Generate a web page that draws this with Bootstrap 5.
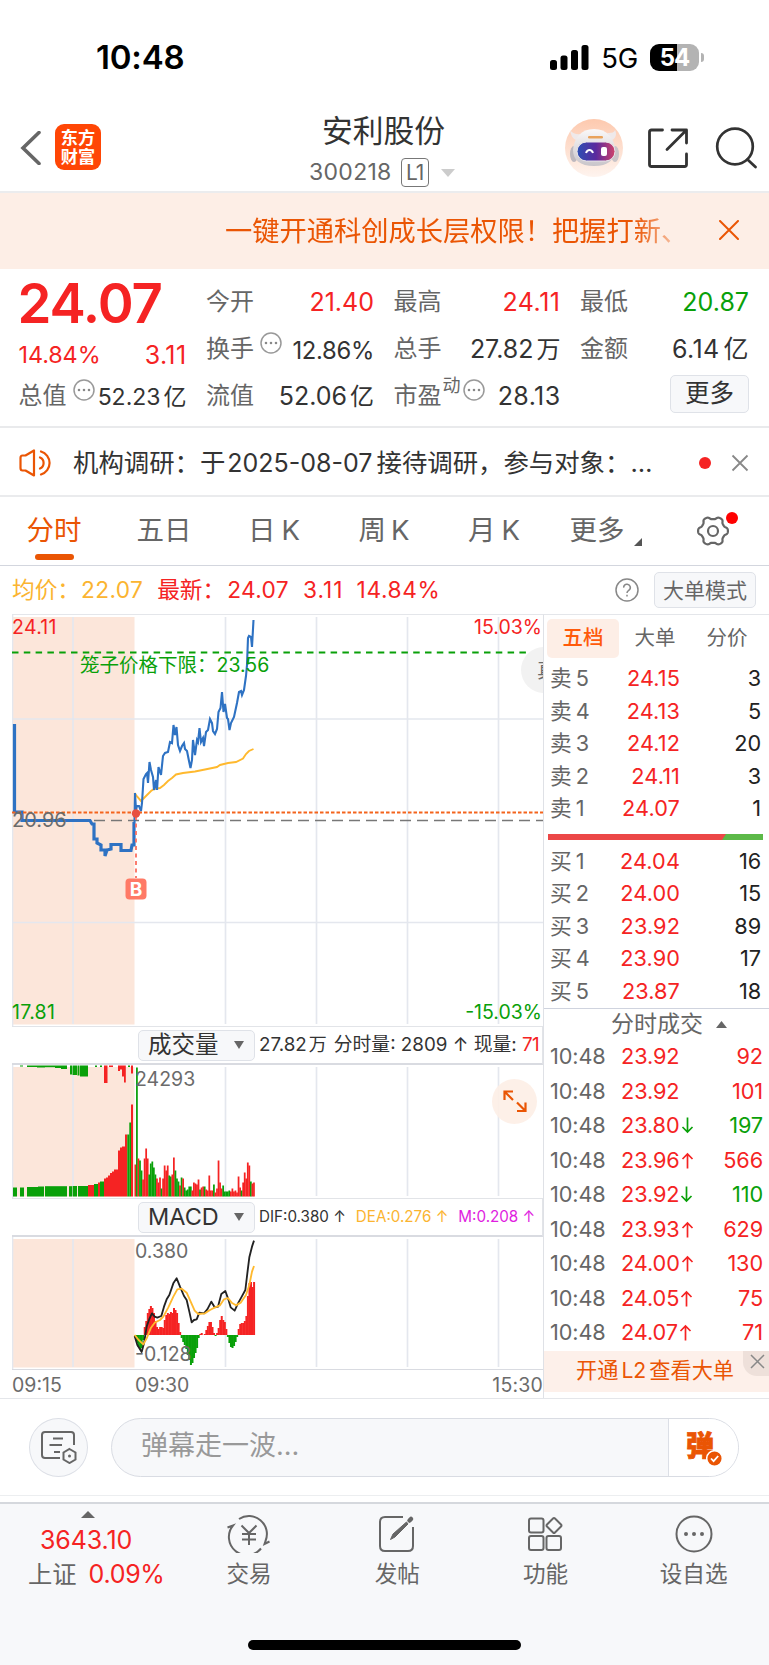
<!DOCTYPE html>
<html lang="zh-CN">
<head>
<meta charset="utf-8">
<meta name="viewport" content="width=device-width, initial-scale=1">
<title>安利股份 300218</title>
<link href="https://cdn.jsdelivr.net/npm/bootstrap@5.3.0/dist/css/bootstrap.min.css" rel="stylesheet">
<style>
:root{--up:#f52323;--down:#09a009;--brand:#ea5504;--ink:#333;--sub:#666;--rule:#e4e6ea;--panel:#f7f8fa}
body{font-family:Inter,"Noto Sans CJK SC",sans-serif;color:var(--ink);background:#fff;width:769px;height:1665px;overflow:hidden;line-height:1;font-weight:400;-webkit-font-smoothing:antialiased}
svg{display:block;flex:none}
.up{color:var(--up)}.down{color:var(--down)}.sub{color:var(--sub)}.brand{color:var(--brand)}
.statusbar{height:112px;padding:3px 65px 0 96px}
.clock{font-size:33px;font-weight:600;letter-spacing:-.2px;color:#000}
.battery{width:49px;height:27px;border-radius:9px;background:linear-gradient(90deg,#000 27px,#b3b3b3 27px);color:#fff;font-size:24px;font-weight:700;letter-spacing:-1px}
.nub{width:3px;height:9px;border-radius:0 4px 4px 0;background:#b3b3b3;margin-left:2px}
.topbar{height:81px;border-bottom:2px solid #ebecee;display:grid;grid-template-columns:270px 1fr 270px}
.applogo{width:46px;height:46px;border-radius:9px;background:#ff4605;color:#fff;font-size:17.2px;font-weight:700;line-height:19px;text-align:center;padding-top:4px}
.stockname{font-size:30.8px;line-height:36px;color:#333;margin:1px 2px 0 0}
.lv{border:1px solid #777;border-radius:4px;width:28px;height:29px;font-size:21px;letter-spacing:-1px}
.promo{height:76px;background:#fdeee6;font-size:27.25px;padding:0 29px 0 225px}
.promo .msg{-webkit-mask-image:linear-gradient(90deg,#000 410px,transparent 466px);width:470px;white-space:nowrap;overflow:hidden;line-height:40px;padding-top:2px}
.quote{height:159px;border-bottom:2px solid #e9eaec;display:grid;grid-template-columns:168px 168px 167px 169px;column-gap:19.5px;grid-template-rows:47px 47px 47px;padding:9.5px 19px 0 18.5px;font-size:25px}
.quote>div{display:flex;justify-content:space-between;align-items:center;white-space:nowrap}
.quote .sub{font-size:24px}
.quote b{font-size:54.5px;font-weight:600;letter-spacing:-1.1px;margin:3px 0 0 -1px}
.greybtn{background:var(--panel);border:1px solid #dfe2e8;border-radius:5px;display:flex;align-items:center;justify-content:center}
.newsbar{height:69px;border-bottom:2px solid #eaebed;padding:3px 20px 0 19px;font-size:25.4px}
.tabs{height:69px;border-bottom:1px solid #d3d6de;font-size:27.5px;color:var(--sub)}
.tabs>div{width:110px;height:68px;display:flex;align-items:center;justify-content:center;position:relative;left:-1px}
.tabs .on{color:var(--brand)}
.tabs .on::after{content:"";position:absolute;left:36px;top:57px;width:39px;height:6px;border-radius:3px;background:var(--brand)}
.inforow{height:48px;padding:0 13px 0 12px;font-size:22.7px}
.inforow .n{letter-spacing:.35px}
.board{height:785px;border-bottom:1px solid #e4e6ea}
.charts{width:531px;margin-left:12px;border-top:1px solid var(--rule)}
.charts text{font-size:19.5px;fill:#6b6b6b}
.indbar{border:1px solid #e2e4e8;border-left:0;border-bottom:2px solid #d9dbe1;font-size:18.8px;padding-left:126px;width:531px}
.indbar .greybtn{width:117px;height:31px;font-size:23.5px;justify-content:space-between;padding:0 10px 0 9px;flex:none;color:#333}
.axis{font-size:19.5px;color:#6b6b6b;height:29px;padding-top:3px}
.side{width:226px;border-left:1px solid #dfe1e6;border-top:1px solid var(--rule)}
.subtabs{height:48px;font-size:20.5px;padding:4px 0 0 3px;color:var(--sub)}
.subtabs>div{height:39px;width:72px;display:flex;align-items:center;justify-content:center;border-radius:5px}
.subtabs .on{background:#fdeee6;color:#ff5a0a;font-weight:500}
.lvrow,.tick{display:grid;align-items:center;font-size:21.7px;white-space:nowrap}
.lvrow{height:32.5px;grid-template-columns:60px 70px 1fr;padding:0 8px 0 6px}
.lvrow>:nth-child(2){text-align:right;letter-spacing:.1px}
.lvrow>:nth-child(3){text-align:right;color:#222;letter-spacing:-.1px}
.tick{height:34.5px;grid-template-columns:71px 1fr auto;padding:0 6px 0 6px;letter-spacing:-.1px}
.tick svg{display:inline-block;vertical-align:-1px}
.l2{height:41px;background:#fdf0ea;color:var(--brand);font-size:21.2px;position:relative;padding-left:32px}
.l2 i{position:absolute;right:0;top:0;width:26px;height:25px;background:#eee0da;border-radius:0 0 0 14px}
.danmu{height:97px;border-bottom:1px solid #eceef0;padding:0 30px 0 29px}
.rnd{width:59px;height:59px;border-radius:50%;border:1px solid #dcdfe6;background:var(--panel)}
.pill{width:629px;height:59px;border-radius:30px;border:1px solid #d9dce3;background:var(--panel);overflow:hidden;margin-left:23px;font-size:27px;color:#999}
.send{width:70px;background:#fff;border-left:1px solid #dcdfe6;position:relative}
.botnav{margin-top:6px;height:163px;background:var(--panel);border-top:2px solid #d5d8dd;font-size:23px;color:var(--sub);position:relative}
.botnav .cell{width:148.2px;display:flex;flex-direction:column;align-items:center;padding-top:11px}
.botnav .cell span{line-height:30px;margin-top:6px;font-size:22.6px}
.idx{width:175px;position:relative}
.homebar{position:absolute;left:248px;top:136px;width:273px;height:10px;border-radius:5px;background:#000}
</style>
</head>
<body>
<div class="statusbar d-flex align-items-center justify-content-between">
  <span class="clock">10:48</span>
  <div class="d-flex align-items-center">
    <svg width="39" height="25" viewBox="0 0 39 25"><rect x="0" y="15" width="7" height="10" rx="2.5"/><rect x="10.5" y="10.5" width="7" height="14.5" rx="2.5"/><rect x="21" y="5" width="7" height="20" rx="2.5"/><rect x="31.5" y="0" width="7" height="25" rx="2.5"/></svg>
    <span class="text-black" style="font-size:27.5px;margin:3px 12px 0 12px;letter-spacing:-.2px">5G</span>
    <div class="battery d-flex align-items-center justify-content-center">54</div><div class="nub"></div>
  </div>
</div>

<header class="topbar">
  <div class="d-flex align-items-center pb-2" style="padding-left:20px">
    <svg width="22" height="34" viewBox="0 0 22 34" fill="none" stroke="#666" stroke-width="3.6"><path d="M19 1.5 3 17 19 32.5" stroke-linecap="round"/></svg>
    <div class="applogo" style="margin:-1px 0 0 13px">东方<br>财富</div>
  </div>
  <div class="text-center">
    <div class="stockname">安利股份</div>
    <div class="d-flex align-items-center sub" style="margin:9px 0 0 39px;font-size:23px;letter-spacing:.3px">300218
      <span class="lv d-flex align-items-center justify-content-center" style="margin:0 12px 0 9px">L1</span>
      <svg width="14" height="8" viewBox="0 0 14 8"><path d="M0 0h14L7 8z" fill="#ccc"/></svg>
    </div>
  </div>
  <div class="d-flex align-items-center" style="padding:0 0 7px 66px">
    <svg width="58" height="58" viewBox="0 0 58 58">
      <defs><linearGradient id="halo" x2="0" y2="1"><stop stop-color="#fdc9ae"/><stop offset="1" stop-color="#fef4ef"/></linearGradient>
      <linearGradient id="visor"><stop stop-color="#2b4fb4"/><stop offset=".5" stop-color="#5b2a9e"/><stop offset="1" stop-color="#d0426a"/></linearGradient>
      <linearGradient id="shell" x2="0" y2="1"><stop stop-color="#faf8f8"/><stop offset="1" stop-color="#c9c5ca"/></linearGradient></defs>
      <circle cx="29" cy="29" r="29" fill="url(#halo)"/>
      <path d="M5 11c1 5 2 8 6 10l6-6c-5 1-9 0-12-4zM50 11c-1 3-4 3-8 3l5 7c4-2 5-6 3-10z" fill="#efe9ea"/>
      <ellipse cx="9" cy="35" rx="4" ry="8" fill="#bdb8be"/><ellipse cx="50" cy="35" rx="4" ry="8" fill="#c9c4c8"/>
      <path d="M29 10c13 0 20 9 21 20 0 11-7 17-21 17S8 41 8 31c1-12 8-21 21-21z" fill="url(#shell)"/>
      <rect x="12" y="23" width="38" height="19" rx="9.500" fill="url(#visor)" stroke="#e9e4ea"/>
      <rect x="23" y="17" width="15" height="2.6" rx="1.300" fill="#e9a35c"/>
      <path d="M21 34c1.500-4 5.500-4 7 0" fill="none" stroke="#fff" stroke-width="2"/><rect x="36" y="28" width="6" height="9" rx="2" fill="#fff"/>
    </svg>
    <svg style="margin-left:25px" width="40" height="40" viewBox="0 0 40 40" fill="none" stroke="#333" stroke-width="2.8" stroke-linecap="round" stroke-linejoin="round"><path d="M14.5 2H3.5Q1.5 2 1.5 4V36.500Q1.5 38.500 3.5 38.500H36.500Q38.500 38.500 38.500 36.500V26M24 2H38.500V15M38 2.500 19 21.500"/></svg>
    <svg style="margin-left:27px" width="42" height="42" viewBox="0 0 42 42" fill="none" stroke="#333" stroke-width="2.7" stroke-linecap="round"><circle cx="20" cy="19.500" r="17.8"/><path d="m32.500 32.500 8 7.500"/></svg>
  </div>
</header>

<div class="promo brand d-flex align-items-center justify-content-between">
  <div class="msg">一键开通科创成长层权限！把握打新、</div>
  <svg style="margin:0 1px 2px 0" width="20" height="20" viewBox="0 0 20 20" stroke="#ea5504" stroke-width="2" stroke-linecap="round"><path d="M1 1 19 19M19 1 1 19"/></svg>
</div>

<section class="quote">
  <div class="up"><b>24.07</b></div>
  <div><span class="sub">今开</span><span class="up">21.40</span></div>
  <div><span class="sub">最高</span><span class="up" style="letter-spacing:.5px">24.11</span></div>
  <div><span class="sub">最低</span><span class="down">20.87</span></div>
  <div class="up" style="padding-top:12px;font-size:23.4px"><span style="letter-spacing:-.1px">14.84%</span><span style="font-size:25px;letter-spacing:.4px">3.11</span></div>
  <div><span class="sub d-flex">换手<svg style="margin:-5px 0 0 6px" width="22" height="22" viewBox="0 0 22 22"><circle cx="11" cy="11" r="10" fill="none" stroke="#999" stroke-width="1.5"/><path d="M6 11h0M11 11h0M16 11h0" stroke="#888" stroke-width="2.6" stroke-linecap="round"/></svg></span><span style="font-size:23.8px;letter-spacing:-.3px;padding-top:3px">12.86%</span></div>
  <div><span class="sub">总手</span><span>27.82<span style="margin-left:3px;font-size:24px">万</span></span></div>
  <div><span class="sub">金额</span><span style="letter-spacing:.4px">6.14<span style="margin-left:4px">亿</span></span></div>
  <div><span class="sub d-flex">总值<svg style="margin:-5px 0 0 6px" width="22" height="22" viewBox="0 0 22 22"><circle cx="11" cy="11" r="10" fill="none" stroke="#999" stroke-width="1.5"/><path d="M6 11h0M11 11h0M16 11h0" stroke="#888" stroke-width="2.6" stroke-linecap="round"/></svg></span><span style="font-size:23px;padding-top:2px">52.23<span style="margin-left:3px">亿</span></span></div>
  <div><span class="sub">流值</span><span>52.06<span style="margin-left:3px;font-size:24px">亿</span></span></div>
  <div><span class="sub d-flex">市盈<span style="font-size:18px;margin:-7px 0 0 1px">动</span><svg style="margin:-5px 0 0 2px" width="22" height="22" viewBox="0 0 22 22"><circle cx="11" cy="11" r="10" fill="none" stroke="#999" stroke-width="1.5"/><path d="M6 11h0M11 11h0M16 11h0" stroke="#888" stroke-width="2.6" stroke-linecap="round"/></svg></span><span style="letter-spacing:.4px">28.13</span></div>
  <div class="justify-content-end"><span class="greybtn" style="width:79px;height:38px;margin-top:-5px;font-size:24.5px">更多</span></div>
</section>

<div class="newsbar d-flex align-items-center">
  <svg width="34" height="28" viewBox="0 0 34 28" fill="none" stroke="#ea5504" stroke-width="2.2" stroke-linejoin="round" stroke-linecap="round"><path d="M15 1.5V26.500L6.500 21.500H3.500Q1.500 21.500 1.500 19V9Q1.500 6.500 3.500 6.500H6.500zM21 8.500a6 6 0 0 1 0 11M22 2.500a12 12 0 0 1 0 23"/></svg>
  <span class="text-nowrap" style="margin:-1px 0 0 20px">机构调研：于<span style="margin:0 4px 0 2px;font-size:25px">2025-08-07</span>接待调研，参与对象：…</span>
  <svg class="ms-auto" width="12" height="12"><circle cx="6" cy="6" r="6" fill="#f52323"/></svg>
  <svg style="margin-left:20px" width="18" height="18" viewBox="0 0 18 18" stroke="#888" stroke-width="1.8"><path d="M1.500 1.500 16.500 16.500M16.500 1.500 1.500 16.500"/></svg>
</div>

<nav class="tabs d-flex">
  <div class="on">分时</div><div>五日</div><div>日<span style="margin-left:6px">K</span></div><div>周<span style="margin-left:5px">K</span></div><div>月<span style="margin-left:6px">K</span></div>
  <div style="padding-left:3px">更多<svg style="margin:22px 0 0 9px" width="8" height="8"><path d="M8 0V8H0z" fill="#555"/></svg></div>
  <div style="width:107px"><svg width="34" height="32" viewBox="-17 -16 34 32" fill="none" stroke="#666" stroke-width="2.2"><path id="gear"/><circle r="5"/></svg>
  <svg class="position-absolute" style="left:67px;top:15px" width="12" height="12"><circle cx="6" cy="6" r="6" fill="red"/></svg></div>
</nav>

<div class="inforow d-flex align-items-center">
  <span style="color:#fbb430">均价：<span class="n" style="margin-left:1px">22.07</span></span>
  <span class="up" style="margin-left:14px">最新：<span class="n" style="margin-left:2px">24.07</span></span>
  <span class="up n" style="margin-left:14px;letter-spacing:1px">3.11</span><span class="up n" style="margin-left:13px;letter-spacing:.6px">14.84%</span>
  <svg class="ms-auto" width="24" height="24" viewBox="0 0 24 24" fill="none" stroke="#888" stroke-width="1.5"><circle cx="12" cy="12" r="11"/><path d="M8.700 9.600a3.300 3.300 0 1 1 5 2.700q-1.700 1-1.700 2.700M12 16.800v1.700"/></svg>
  <span class="greybtn sub" style="width:102px;height:36px;margin-left:15px;font-size:21px">大单模式</span>
</div>

<div class="board d-flex">
  <div class="charts">
    <svg width="531" height="411" viewBox="12 615 531 411" fill="none">
      <path d="M12.500 617H134.500V1024.500H12.500z" fill="#fce6da"/>
      <path d="M73 617V1024M225.500 617V1024M316.500 617V1024M407.500 617V1024M498.500 617V1024M12 719H544M12 922.500H544M12.500 615V1027" stroke="#e4e7ee" stroke-width="1.700"/>
      <path d="M12 652.500H544" stroke="#09a009" stroke-width="2" stroke-dasharray="6.500 5.300"/>
      <path d="M60 820.500H544" stroke="#777" stroke-width="1.400" stroke-dasharray="11 6"/>
      <path d="M544 647A23 23 0 1 0 544 693z" fill="#f2f2f2"/><text x="537" y="678" style="font-size:20px">真</text>
      <path d="M134.500 793 137.500 797 141 801 146 796 151 791 154 789 160 788 164 785 168 781 172 778 176 774.500 183 773 195 771.500 205 769.500 217 767 220 765 228 763 236 762 243 758.500 246 754 249 751 253.500 749" stroke="#ffb92e" stroke-width="1.900"/>
      <path d="M14.500 724V812H22V820.500H90L92 824H94V839H97V843L101 845V850H105V856L107 850 111 849V844.500H121V850.500H131L132 845H134V822" stroke="#2e72c3" stroke-width="3.200"/>
      <path d="M134.500 822 135 793 136 810 137 806 139 806 141 811 142 803 143.500 779 146 774 147 773 148 783 149.500 762 151 770 153 777 154 790 156 780 157 790 158.500 767 161 775 163 756 165 753 168 752 170 742 172 743 173.500 725 175 735 176.500 727 178 745 180 751 182 746 184 743 185 749 187 751 189 761 190.500 768 192 760 193 740 195 755 197 740 198 742 199.500 728 201 742 203 738 204 746 206 732 208 730 210 719 212 723 213 731 215 734 217 729 218.500 712 220.500 708 222 692 223.500 712 225 704 227 718 228 719 229.500 730 231 723 234 717 237 703 239 692 241 691 242 695 244 690 246 676 247 665 248 638 249 636 251 637 252 647 253.500 620" stroke="#2e72c3" stroke-width="2.100"/>
      <path d="M12 812.500H544" stroke="#f4641d" stroke-width="2" stroke-dasharray="3.500 2"/>
      <path d="M136 816V878" stroke="#fb6f5f" stroke-width="1.800" stroke-dasharray="4 3.500"/>
      <circle cx="136" cy="813.500" r="4.200" fill="#e8503f"/>
      <rect x="125.500" y="878.500" width="21" height="21" rx="4" fill="#ff7a66"/><text x="136" y="896" text-anchor="middle" style="font-size:19px;font-weight:700;fill:#fff">B</text>
      <text x="12" y="634" style="fill:#f52323;letter-spacing:.3px">24.11</text><text x="542" y="634" text-anchor="end" style="fill:#f52323">15.03%</text>
      <text x="80" y="672" style="fill:#09a009">笼子价格下限：23.56</text>
      <text x="12" y="826.500" style="font-size:20px">20.96</text>
      <text x="12" y="1019" style="fill:#09a009;letter-spacing:.3px">17.81</text><text x="542" y="1019" text-anchor="end" style="fill:#09a009">-15.03%</text>
    </svg>
    <div class="indbar d-flex align-items-center text-nowrap" style="height:39px">
      <span class="greybtn">成交量<svg width="10" height="8"><path d="M0 0H10L5 8z" fill="#666"/></svg></span>
      <span style="margin-left:4px">27.82<span style="margin:0 7px 0 2px;font-size:18px">万</span>分时量: 2809 ↑ 现量: <span class="up" style="letter-spacing:-.5px">71</span></span>
    </div>
    <svg width="531" height="133" viewBox="12 1065 531 133">
      <path d="M12.500 1067H134.500V1196.500H12.500z" fill="#fce6da"/>
      <path d="M12.500 1065V1198M73 1067V1196M225.500 1067V1196M316.500 1067V1196M407.500 1067V1196M498.500 1067V1196" stroke="#e4e7ee" stroke-width="1.700"/>
      <g id="vol"></g>
      <text x="135" y="1086">24293</text>
      <circle cx="514.500" cy="1101.500" r="22.500" fill="#fdeee6" fill-opacity=".9"/>
      <path d="M504.500 1100V1091.500H513M505 1092 513 1100M525.500 1102.500V1111H517M525 1110.500 517 1102.500" fill="none" stroke="#ea5504" stroke-width="2.200"/>
    </svg>
    <div class="indbar d-flex align-items-center text-nowrap" style="height:39px;font-size:15.2px">
      <span class="greybtn">MACD<svg width="10" height="8"><path d="M0 0H10L5 8z" fill="#666"/></svg></span>
      <span style="margin-left:4px">DIF:0.380 ↑</span><span style="margin-left:10px;color:#fbb430">DEA:0.276 ↑</span><span style="margin-left:10px;color:#e01ee0">M:0.208 ↑</span>
    </div>
    <svg width="531" height="132" viewBox="12 1237 531 132">
      <path d="M12.500 1239H134.500V1367.500H12.500z" fill="#fce6da"/>
      <path d="M12.500 1237V1369M73 1239V1367M225.500 1239V1367M316.500 1239V1367M407.500 1239V1367M498.500 1239V1367" stroke="#e4e7ee" stroke-width="1.700"/>
      <g id="macd"></g>
      <g transform="translate(0 1020) scale(.33333)" fill="none" stroke-width="5.500" stroke-linejoin="round">
        <path stroke="#222" d="M404 948 412 975 425 996 432 970 440 920 448 897 456 880 464 890 472 893 484 888 492 860 500 838 508 825 520 790 530 775 540 800 552 828 560 840 568 875 575 907 582 900 590 898 598 878 612 880 622 868 634 845 644 862 654 860 664 822 676 813 684 835 692 862 704 872 714 850 724 832 736 810 742 760 748 712 756 680 762 662"/>
        <path stroke="#ffb92e" d="M404 945 416 960 430 973 440 955 452 925 464 908 480 900 490 890 505 862 520 830 532 808 545 806 560 818 572 845 584 872 595 882 615 880 630 870 645 862 660 856 672 838 684 834 695 848 708 856 722 848 738 825 748 795 756 755 762 738"/>
      </g>
      <text x="135" y="1258">0.380</text><text x="135" y="1361">-0.128</text>
    </svg>
    <div class="axis d-flex align-items-center" style="border-top:1px solid #d9dbe1"><span style="width:123px">09:15</span><span>09:30</span><span class="ms-auto" style="letter-spacing:.2px">15:30</span></div>
  </div>

  <aside class="side">
    <div class="subtabs d-flex"><div class="on">五档</div><div>大单</div><div>分价</div></div>
    <div id="asks"></div>
    <svg style="margin:8px 0 6px 4px" width="215" height="6"><path d="M0 0H215V6H0z" fill="#5cb948"/><path d="M0 0H178L174 6H0z" fill="#ec4747"/></svg>
    <div id="bids"></div>
    <div class="d-flex align-items-center sub" style="height:32px;border-top:1px solid #cfd3de;font-size:23px;padding-left:67px">分时成交<svg style="margin-left:13px" width="11" height="7"><path d="M0 7H11L5.500 0z" fill="#666"/></svg></div>
    <div id="ticks"></div>
    <div class="l2 d-flex align-items-center">开通<span style="margin:0 3px">L2</span>查看大单<i><svg style="margin:3px 0 0 7px" width="15" height="15" stroke="#888" stroke-width="1.5"><path d="M1 1 14 14M14 1 1 14"/></svg></i></div>
  </aside>
</div>

<div class="danmu d-flex align-items-center">
  <div class="rnd d-flex align-items-center justify-content-center"><svg width="37" height="34" viewBox="0 0 37 34" fill="none" stroke="#666" stroke-width="2"><path d="M20 28H5Q2 28 2 25V5Q2 2 5 2H31Q34 2 34 5V15M13 8.500H23M9.500 15H22M14 22H20"/><path d="m29.500 19 6 3.500v7l-6 3.500-6-3.500v-7z"/><circle cx="29.500" cy="26" r="1.500" fill="#666" stroke="none"/></svg></div>
  <div class="pill d-flex"><div class="flex-grow-1 d-flex align-items-center" style="padding:0 0 4px 29px">弹幕走一波...</div>
    <div class="send"><span class="brand position-absolute" style="left:17px;top:13px;font-size:28px;font-weight:900;-webkit-text-stroke:.8px #ea5504">弹</span>
    <svg class="position-absolute" style="left:37px;top:31px" width="17" height="17"><circle cx="8.500" cy="8.500" r="7.800" fill="#ea5504" stroke="#fff" stroke-width="1.500"/><path d="m5 8.500 2.600 2.700L12.200 6" fill="none" stroke="#fff" stroke-width="1.800"/></svg></div>
  </div>
</div>

<nav class="botnav d-flex">
  <div class="idx">
    <svg style="margin:7px 0 0 81px" width="14" height="7"><path d="M0 7H14L7 0z" fill="#666"/></svg>
    <div class="up" style="margin:10px 0 0 40px;font-size:25px;letter-spacing:-.1px">3643.10</div>
    <div class="text-nowrap" style="margin:9px 0 0 28px;font-size:24.3px">上证<span class="up" style="margin-left:12px;font-size:25px;letter-spacing:-.3px">0.09%</span></div>
  </div>
  <div class="cell"><svg width="44" height="38" viewBox="0 0 44 38" fill="none" stroke="#666" stroke-width="2"><path d="M12 4A18 18 0 0 1 38.500 26L37.500 29 42.500 26.500M34 33.500A18 18 0 0 1 6 10.500L.5 12.500"/><path d="m14.500 10.500 7.500 7.500 7.500-7.500M15 19H29M15 24.500H29M22 18V30"/></svg><span>交易</span></div>
  <div class="cell"><svg width="38" height="38" viewBox="0 0 38 38" fill="none" stroke="#666" stroke-width="2"><path d="M25 2H7Q2 2 2 7V31Q2 36 7 36H30Q35 36 35 31V12"/><path d="M12.500 24.500 15 19 28.500 7 30 9 17 22z" fill="#666" stroke-width="1"/><path d="m31.500 5.500 1.500-1.500" stroke-width="4.500" stroke-linecap="round"/></svg><span>发帖</span></div>
  <div class="cell"><svg width="38" height="38" viewBox="0 0 38 38" fill="none" stroke="#666" stroke-width="2"><rect x="3" y="3.500" width="14.500" height="14" rx="2"/><rect x="3" y="21" width="14.500" height="14" rx="2"/><rect x="20.500" y="21" width="14.500" height="14" rx="2"/><path d="M27 3.500q1-1 2 0l6 6q1 1 0 2l-6 6q-1 1-2 0l-6-6q-1-1 0-2z"/></svg><span>功能</span></div>
  <div class="cell"><svg width="38" height="38" viewBox="0 0 38 38" fill="none" stroke="#666" stroke-width="2"><circle cx="19" cy="19" r="17.500"/><path d="M11 19h0M19 19h0M27 19h0" stroke-width="4" stroke-linecap="round"/></svg><span>设自选</span></div>
  <div class="homebar"></div>
</nav>

<script src="https://cdn.jsdelivr.net/npm/bootstrap@5.3.0/dist/js/bootstrap.bundle.min.js"></script>
<script>
const RED='#f52323',GREEN='#09a009';
const bar=(x,y,w,h,c)=>`<rect x="${x}" y="${y}" width="${w}" height="${h}" fill="${c}"/>`;
// settings gear: six flat-topped lobes
let g='';
for(let a=0;a<360;a+=3){const t=a*Math.PI/180,r=13.2+1.5*Math.tanh(1.8*Math.cos(6*t));g+=(a?'L':'M')+(r*1.02*Math.cos(t)).toFixed(2)+' '+(r*Math.sin(t)).toFixed(2)}
document.getElementById('gear').setAttribute('d',g+'z');
// call auction: [x, width, height, colour]
const auction=[[13,4,9,'g'],[20,4,9,'g'],[27,11,9.5,'g'],[38,6,10,'g'],[45,22,10.3,'g'],[69,3,10.3,'g'],[72.6,4.4,10.5,'g'],[78,10,10.5,'g'],[88,6,11.5,'r'],[94,4,12.5,'g'],[98,2,14,'r'],[100,4,15,'g'],[104,2,18,'r'],[106,2,19,'r'],[108,2,21,'r'],[110,2,23.5,'r'],[112,2,25,'r'],[114,4,27,'r'],[118,2,46,'r'],[120,2,49,'r'],[122,3,50,'r'],[125,2.3,62,'r'],[127.3,2,62,'g'],[129.3,1.7,74,'g'],[131,2,92,'r']];
const unmatched=[[20,3,1,'g'],[27,10,1.5,'g'],[37,8,2,'g'],[45,10,1.7,'g'],[55,6,2.5,'g'],[61,6,3.5,'g'],[70,2,9,'g'],[72.5,4.5,9.5,'g'],[77.5,2,10,'g'],[80,8,11,'g'],[95,2,1.5,'g'],[100,2,1.5,'g'],[104,3.5,17.5,'r'],[109,4,1.5,'r'],[118,2,5.5,'r'],[120,2,4,'r'],[122,2,11,'r'],[124,1.8,17,'r'],[128,2,1.5,'g'],[131,2,8,'r']];
let v='';
auction.forEach(([x,w,h,c])=>v+=bar(x,1196.5-h,w,h,c=='r'?RED:GREEN));
unmatched.forEach(([x,w,h,c])=>v+=bar(x,1065.5,w,h,c=='r'?RED:GREEN));
const vol='r32 g129 r38 g36 g26 r17 r38 r48 r38 g22 g33 g35 g29 g22 r18 r14 r19 g8 r18 r31 r26 r31 g21 g20 r22 r39 g26 g18 g15 r11 g19 r18 g9 g6 g7 g10 g10 r6 r14 r13 r12 r17 g7 r9 r10 g10 r7 r6 r21 r6 r6 g12 r4 r8 r36 r14 r8 g11 g5 g5 g5 g6 r5 r8 r5 r6 r4 r20 r9 g6 r14 r24 r18 r34 r31 g15 r13 r14'.split(' ');
const pitch=1.54;
vol.forEach((d,i)=>{const h=+d.slice(1);v+=bar((134.5+i*pitch).toFixed(2),1196.5-h,1.75,h,d[0]=='r'?RED:GREEN)});
document.getElementById('vol').innerHTML=v;
const hist=[-3,-8,-12,-14,-13,-5,8,14,22,26,29,27,22,14,8,6,8,8,7,15,20,22,21,23,22,27,25,22,12,3,-3,-7,-10,-14,-20,-25,-30,-28,-23,-18,-13,-3,1,2,0,1,5,9,13,13,8,2,-1,2,7,15,19,15,13,6,-2,-8,-12,-13,-11,-7,-2,6,11,12,12,14,19,39,52,53,48,53];
document.getElementById('macd').innerHTML=hist.map((h,i)=>bar((134.5+i*pitch).toFixed(2),h>0?1335-h:1335,2,Math.abs(h),h>0?RED:GREEN)).join('');
const level=([n,p,q])=>`<div class="lvrow"><span class="sub">${n[0]}<span style="margin-left:4px">${n[1]}</span></span><span class="up">${p}</span><span>${q}</span></div>`;
asks.innerHTML=[['卖5','24.15',3],['卖4','24.13',5],['卖3','24.12',20],['卖2','24.11',3],['卖1','24.07',1]].map(level).join('');
bids.innerHTML=[['买1','24.04',16],['买2','24.00',15],['买3','23.92',89],['买4','23.90',17],['买5','23.87',18]].map(level).join('');
const arrow={u:'<svg width="15" height="17" fill="none" stroke="#f52323" stroke-width="1.700"><path d="M7.500 16.500V2M2.500 7 7.500 2l5 5"/></svg>',d:'<svg width="15" height="17" fill="none" stroke="#09a009" stroke-width="1.700"><path d="M7.500 .500V15M2.500 10l5 5 5-5"/></svg>','':''};
ticks.innerHTML=[['23.92','',92,'up'],['23.92','',101,'up'],['23.80','d',197,'down'],['23.96','u',566,'up'],['23.92','d',110,'down'],['23.93','u',629,'up'],['24.00','u',130,'up'],['24.05','u',75,'up'],['24.07','u',71,'up']]
.map(([p,a,q,c])=>`<div class="tick"><span class="sub">10:48</span><span class="up">${p}${arrow[a]}</span><span class="${c}">${q}</span></div>`).join('');
</script>
</body>
</html>
